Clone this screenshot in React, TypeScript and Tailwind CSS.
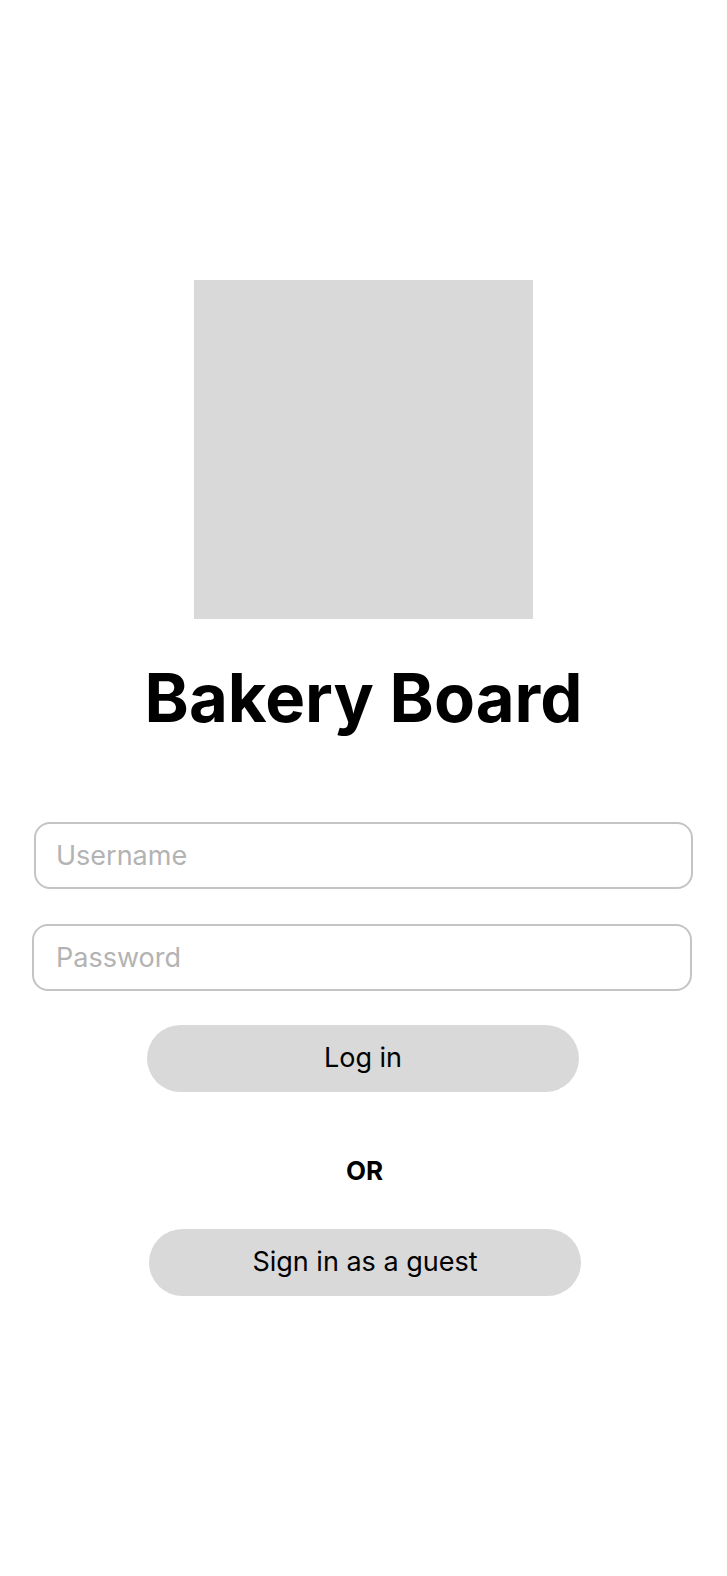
import React, { useState } from 'react';

const LoginScreen: React.FC = () => {
  const [username, setUsername] = useState('');
  const [password, setPassword] = useState('');

  return (
    <div
      className="min-h-[1576px] w-full bg-white flex flex-col"
      style={{ fontFamily: 'Inter, "Noto Sans", sans-serif' }}
    >
      {/* logo placeholder */}
      <div className="mt-[280px] ml-[194px] w-[339px] h-[339px] bg-[#d9d9d9]" />

      <h1 className="mt-[45px] text-center text-[67px] leading-none font-bold text-black">
        Bakery Board
      </h1>

      <form className="flex flex-col mt-[91px]" onSubmit={(e) => e.preventDefault()}>
        <input
          type="text"
          value={username}
          onChange={(e) => setUsername(e.target.value)}
          placeholder="Username"
          className="ml-[34px] w-[659px] h-[67px] rounded-[16px] border-2 border-[#c4c4c4] px-[20px] text-[27px] text-black placeholder:text-[#b3b3b3] focus:outline-none"
        />
        <input
          type="password"
          value={password}
          onChange={(e) => setPassword(e.target.value)}
          placeholder="Password"
          className="mt-[35px] ml-[32px] w-[660px] h-[67px] rounded-[16px] border-2 border-[#c4c4c4] px-[22px] text-[27px] text-black placeholder:text-[#b3b3b3] focus:outline-none"
        />
        <button
          type="submit"
          className="mt-[34px] ml-[147px] w-[432px] h-[67px] rounded-full bg-[#d9d9d9] text-[27px] text-black"
        >
          Log in
        </button>
      </form>

      <p className="mt-[64px] ml-[2px] text-center text-[26px] leading-[30px] font-bold text-black">OR</p>

      <button
        type="button"
        className="mt-[43px] ml-[149px] w-[432px] h-[67px] rounded-full bg-[#d9d9d9] text-[27px] text-black"
      >
        Sign in as a guest
      </button>
    </div>
  );
};

export default function App() {
  return <LoginScreen />;
}
